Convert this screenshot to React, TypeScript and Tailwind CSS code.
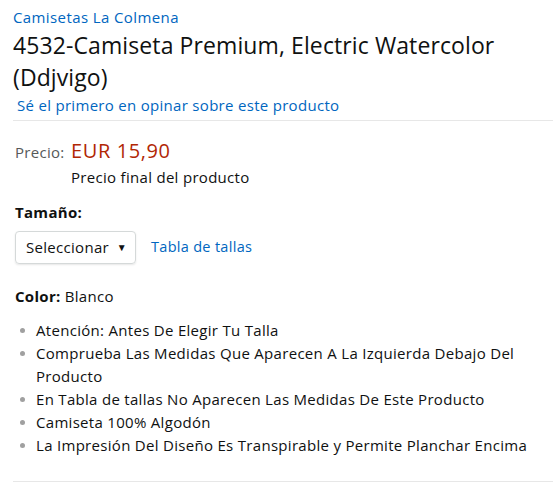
import React from "react";

const bullets = [
  "Atención: Antes De Elegir Tu Talla",
  "Comprueba Las Medidas Que Aparecen A La Izquierda Debajo Del Producto",
  "En Tabla de tallas No Aparecen Las Medidas De Este Producto",
  "Camiseta 100% Algodón",
  "La Impresión Del Diseño Es Transpirable y Permite Planchar Encima",
];

export default function App() {
  return (
    <div
      className="w-[560px] h-[490px] bg-white text-[#0f1111] overflow-hidden tracking-[0.3px]"
      style={{ fontFamily: '"Open Sans", "Noto Sans", sans-serif' }}
    >
      <div className="pl-[13px] pr-[7px] pt-[6px]">
        <div className="text-[15px] leading-[22px] text-[#0066c0] tracking-[0.4px]">Camisetas La Colmena</div>
        <h1 className="text-[23px] leading-[32px] font-normal mt-[1px] tracking-[0.1px]">
          4532-Camiseta Premium, Electric Watercolor (Ddjvigo)
        </h1>
        <div className="pl-[4px] text-[15px] leading-[22px] text-[#0066c0] mt-[1px]">
          Sé el primero en opinar sobre este producto
        </div>
        <div className="h-px bg-[#e7e7e7] mt-[4px]" />

        <div className="pl-[2px] pt-[18px]">
          <div className="flex items-baseline">
            <span className="w-[56px] text-[15px] text-[#565959]">Precio:</span>
            <span className="text-[20px] leading-[24px] text-[#b12704] tracking-[0.6px]">EUR 15,90</span>
          </div>
          <div className="pl-[56px] text-[15px] leading-[22px] mt-[2px]">Precio final del producto</div>

          <div className="text-[15px] font-bold leading-[22px] mt-[13px]">Tamaño:</div>
          <div className="flex items-center mt-[8px]">
            <div className="w-[121px] h-[33px] border border-[#d5d9d9] rounded-[4px] shadow-[0_1px_2px_rgba(15,17,17,0.1)] flex items-center pl-[10px] pr-[8px] justify-between text-[15px]">
              <span>Seleccionar</span>
              <span className="text-[10px]">▼</span>
            </div>
            <span className="ml-[15px] text-[14.5px] text-[#0066c0]">Tabla de tallas</span>
          </div>

          <div className="text-[15px] leading-[22px] mt-[21px]">
            <span className="font-bold">Color: </span>Blanco
          </div>

          <ul className="mt-[12px] pl-[19px] text-[15px] leading-[23px]">
            {bullets.map((b) => (
              <li key={b} className="relative pl-[2px] pr-[10px]">
                <span className="absolute left-[-14px] top-[9px] w-[5px] h-[5px] rounded-full bg-[#a0a0a0]" />
                {b}
              </li>
            ))}
          </ul>
        </div>
        <div className="h-px bg-[#e7e7e7] mt-[24px]" />
      </div>
    </div>
  );
}
